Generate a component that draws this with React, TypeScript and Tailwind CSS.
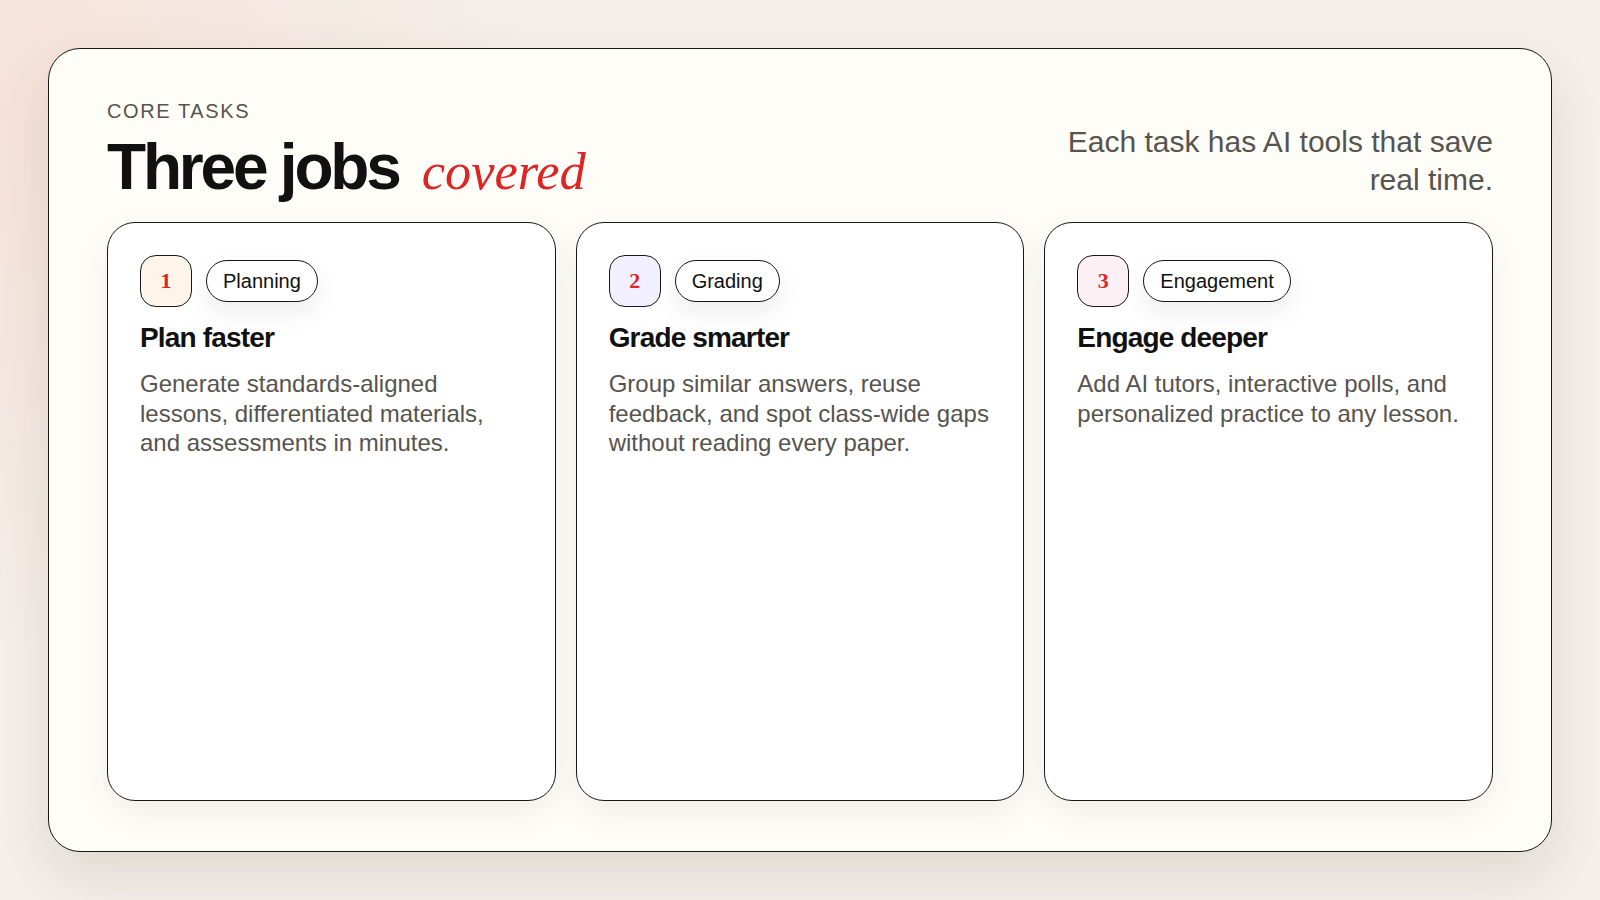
const cards = [
  {
    n: "1",
    tag: "Planning",
    tint: "bg-[#fff4ea]",
    title: "Plan faster",
    body: "Generate standards-aligned lessons, differentiated materials, and assessments in minutes.",
  },
  {
    n: "2",
    tag: "Grading",
    tint: "bg-[#f2efff]",
    title: "Grade smarter",
    body: "Group similar answers, reuse feedback, and spot class-wide gaps without reading every paper.",
  },
  {
    n: "3",
    tag: "Engagement",
    tint: "bg-[#fdf0f4]",
    title: "Engage deeper",
    body: "Add AI tutors, interactive polls, and personalized practice to any lesson.",
  },
];

function TaskCard({ n, tag, tint, title, body }: (typeof cards)[number]) {
  return (
    <div className="rounded-[28px] border border-[#171717] bg-white p-8 shadow-[0_12px_32px_rgba(60,50,30,0.07)]">
      <div className="flex items-center gap-3.5">
        <div className={`flex h-[52px] w-[52px] items-center justify-center rounded-[16px] border border-[#171717] pb-[2px] font-['Liberation_Serif',serif] text-[22px] font-bold text-[#dc2626] ${tint}`}>
          {n}
        </div>
        <div className="rounded-full border border-[#171717] bg-white px-4 py-[7px] text-[20px] leading-[26px] text-[#111111] shadow-[0_10px_24px_rgba(30,30,30,0.08)]">
          {tag}
        </div>
      </div>
      <h3 className="mt-[13px] text-[28px] leading-[36px] font-bold tracking-[-0.03em] text-[#111111]">{title}</h3>
      <p className="mt-[13px] text-[24px] leading-[29.5px] text-[#57534e]">{body}</p>
    </div>
  );
}

export default function App() {
  return (
    <div className="h-[900px] bg-[#f4efe9] bg-[radial-gradient(circle_at_0%_12%,#f6e2da_0%,rgba(246,226,218,0)_30%)] p-12 font-['Liberation_Sans',Arial,sans-serif]">
      <div className="flex h-full flex-col rounded-[32px] border border-[#171717] bg-[#fffdf8] px-[58px] pt-[50px] pb-[50px] shadow-[0_24px_56px_rgba(70,60,30,0.12)]">
        <div className="flex items-end justify-between">
          <div>
            <div className="text-[20px] leading-[24px] tracking-[0.08em] text-[#57534e] uppercase">Core tasks</div>
            <h1 className="mt-2 flex items-baseline gap-[23px] text-[64px] leading-[72px] font-bold tracking-[-0.05em] text-[#111111]">
              Three jobs
              <span className="font-['Liberation_Serif',serif] text-[52.5px] font-normal tracking-normal text-[#dc2626] italic">covered</span>
            </h1>
          </div>
          <p className="mb-[8px] w-[440px] text-right text-[30px] leading-[38px] text-[#57534e]">Each task has AI tools that save real time.</p>
        </div>
        <div className="mt-[15px] grid flex-1 grid-cols-3 gap-5">
          {cards.map((c) => (
            <TaskCard key={c.n} {...c} />
          ))}
        </div>
      </div>
    </div>
  );
}
